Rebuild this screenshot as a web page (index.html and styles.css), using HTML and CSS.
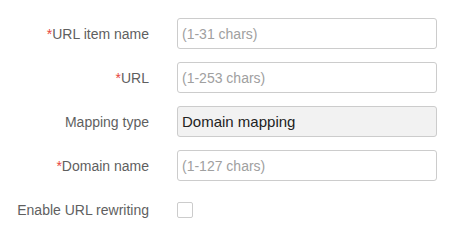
FILE: index.html
```html
<!DOCTYPE html>
<html>
<head>
    <title>URL item</title>
    <meta name="viewport" content="width=device-width, initial-scale=1">
    <link rel="stylesheet" href="styles.css">
</head>
<body>

<div id="form-wrapper">
    <label class="field-label" for="item-name"><span class="required">*</span>URL item name</label>
    <input id="item-name" class="field-input" type="text" placeholder="(1-31 chars)">

    <label class="field-label" for="url"><span class="required">*</span>URL</label>
    <input id="url" class="field-input" type="text" placeholder="(1-253 chars)">

    <label class="field-label" for="mapping">Mapping type</label>
    <input id="mapping" class="field-input readonly" type="text" value="Domain mapping" readonly>

    <label class="field-label" for="domain"><span class="required">*</span>Domain name</label>
    <input id="domain" class="field-input" type="text" placeholder="(1-127 chars)">

    <label class="field-label" for="rewrite">Enable URL rewriting</label>
    <div class="check-cell">
        <span id="rewrite" class="checkbox"></span>
    </div>
</div>

</body>
</html>
```

FILE: styles.css
```css
html, body {
    margin: 0px;
    padding: 0px;
    background-color: #ffffff;
}

#form-wrapper {
    padding-top: 18px;
    display: grid;
    grid-template-columns: 149px 260px;
    grid-auto-rows: 31px;
    column-gap: 28px;
    row-gap: 13px;
    align-items: center;
    font-family: Tahoma, "Liberation Sans", sans-serif;
    font-size: 14px;
}

.field-label {
    text-align: right;
    color: #5f5f5f;
    white-space: nowrap;
}

.required {
    color: #e8453c;
}

.field-input {
    box-sizing: border-box;
    width: 260px;
    height: 31px;
    margin: 0px;
    padding: 0px 4px;
    border: 1px solid #cccccc;
    border-radius: 3px;
    font-family: Tahoma, "Liberation Sans", sans-serif;
    font-size: 14px;
    color: #222222;
    background-color: #ffffff;
    outline: none;
}

.field-input::placeholder {
    color: #a0a0a0;
}

.readonly {
    font-size: 15px;
    background-color: #f2f2f2;
}

.check-cell {
    display: flex;
    align-items: center;
}

.checkbox {
    box-sizing: border-box;
    width: 16px;
    height: 16px;
    border: 1px solid #cccccc;
    border-radius: 2px;
    background-color: #ffffff;
}
```
